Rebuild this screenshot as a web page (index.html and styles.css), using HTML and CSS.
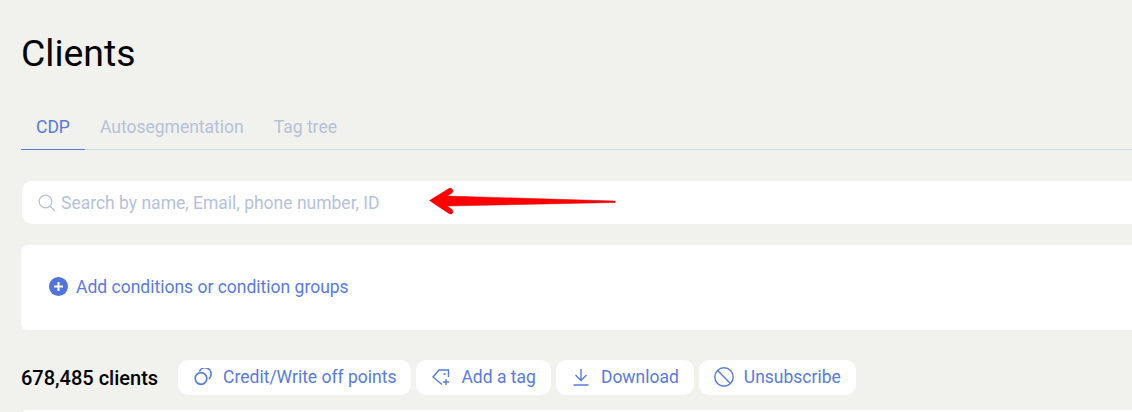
FILE: index.html
```html
<!DOCTYPE html>
<html lang="en">
<head>
    <meta charset="UTF-8">
    <meta name="viewport" content="width=device-width, initial-scale=1.0">
    <title>Clients</title>
    <link rel="stylesheet" href="styles.css">
</head>
<body>
    <main class="page">
        <h1 class="title">Clients</h1>

        <!-- tabs -->
        <nav class="tabs">
            <a class="tab on" href="#">CDP</a>
            <a class="tab" href="#">Autosegmentation</a>
            <a class="tab" href="#">Tag tree</a>
        </nav>

        <!-- search -->
        <div class="search">
            <svg class="search-ico" width="18" height="18" viewBox="0 0 18 18" fill="none" stroke="#b6c1d9" stroke-width="1.3">
                <circle cx="7.5" cy="7.5" r="6.3"/>
                <path d="M12 12l5 5"/>
            </svg>
            <span>Search by name, Email, phone number, ID</span>
        </div>

        <!-- conditions -->
        <div class="conds">
            <svg width="19" height="19" viewBox="0 0 19 19">
                <circle cx="9.5" cy="9.5" r="9.5" fill="#5273d9"/>
                <path d="M9.5 5v9M5 9.5h9" stroke="#fff" stroke-width="2"/>
            </svg>
            <a href="#">Add conditions or condition groups</a>
        </div>

        <!-- action row -->
        <div class="acts">
            <b class="count">678,485 clients</b>
            <a class="btn" href="#">
                <svg width="18" height="18" viewBox="0 0 18 18" fill="none" stroke="#5a7ade" stroke-width="1.7">
                    <circle cx="7" cy="10.500" r="5.800"/>
                    <path d="M5.500 3.500A6 6 0 0 1 17 6.500c0 2-.8 3.500-2.200 4.500"/>
                </svg>
                Credit/Write off points
            </a>
            <a class="btn" href="#">
                <svg width="18" height="18" viewBox="0 0 18 18" fill="none" stroke="#5a7ade" stroke-width="1.4">
                    <path d="M10 16.500L1 9l6-7h9.500v7"/>
                    <circle cx="12.500" cy="6" r="1.100" fill="#5a7ade" stroke="none"/>
                    <path d="M14 11v6M11 14h6"/>
                </svg>
                Add a tag
            </a>
            <a class="btn" href="#">
                <svg width="18" height="18" viewBox="0 0 18 18" fill="none" stroke="#5a7ade" stroke-width="1.4">
                    <path d="M9 1v11M3.500 7L9 12.500 14.500 7M1.500 17h15"/>
                </svg>
                Download
            </a>
            <a class="btn" href="#">
                <svg class="ico-lg" width="20" height="20" viewBox="0 0 20 20" fill="none" stroke="#5a7ade" stroke-width="1.4">
                    <circle cx="10" cy="10" r="9.200"/>
                    <path d="M3.600 3.600l12.800 12.800"/>
                </svg>
                Unsubscribe
            </a>
        </div>

        <div class="table"></div>
    </main>

    <!-- red arrow drawn over the screenshot -->
    <svg class="arrow" width="190" height="32" viewBox="0 0 190 32">
        <path d="M.5 14.500L20 2.500q2.500-1 3.500 1t-.5 3.500L18 10 186 15v1.500L18 20l5 3.500q1.500 2 .5 3.500t-3.500.5z" fill="#f00" stroke="#c00" stroke-width=".5" stroke-linejoin="round"/>
    </svg>
</body>
</html>
```

FILE: styles.css
```css
html,body{
    margin: 0;
    padding: 0;
}
body{
    position: relative;
    width: 1132px;
    height: 412px;
    overflow: hidden;
    background-color: #f1f1ed;
    font-family: Roboto, "Liberation Sans", sans-serif;
    color: #000;
}
a{
    text-decoration: none;
    color: #5a7ade;
}

.page{
    width: 1200px;
    height: 412px;
    overflow: hidden;
    padding: 31px 0 0 21px;
    box-sizing: border-box;
}
.title{
    margin: 0;
    font-size: 37.4px;
    font-weight: 400;
    line-height: 44px;
}

/* tabs */
.tabs{
    display: flex;
    margin-top: 28px;
    border-bottom: 1px solid #d5dbe6;
}
.tab{
    padding: 2px 15px 0;
    margin-bottom: -1px;
    font-size: 17.5px;
    line-height: 44px;
    color: #b6c1d9;
    border-bottom: 1px solid transparent;
}
.tab.on{
    color: #5a7ade;
    border-bottom-color: #5a7ade;
}

/* search */
.search{
    display: flex;
    align-items: center;
    gap: 5px;
    height: 43px;
    margin: 31px 0 0 1px;
    padding-left: 16px;
    background-color: #fff;
    border-radius: 10px;
    font-size: 17.5px;
    color: #b6c1d9;
}

/* conditions */
.conds{
    display: flex;
    align-items: center;
    gap: 8px;
    height: 83px;
    margin-top: 21px;
    padding: 0 0 2px 28px;
    background-color: #fff;
    border-radius: 6px;
    font-size: 17.5px;
}

/* action row */
.acts{
    display: flex;
    align-items: center;
    gap: 5px;
    margin-top: 30px;
}
.count{
    margin-right: 15px;
    font-size: 20px;
    font-weight: 500;
}
.btn{
    display: flex;
    align-items: center;
    gap: 11px;
    height: 33px;
    padding: 0 15px 2px 16px;
    background-color: #fff;
    border-radius: 10px;
    font-size: 17.5px;
    white-space: nowrap;
}
.ico-lg{
    margin: 0 -1px 0 -1px;
}

.table{
    height: 60px;
    margin-top: 15px;
    background-color: #fff;
    border-radius: 6px;
}

.arrow{
    position: absolute;
    left: 429px;
    top: 186px;
}
```
